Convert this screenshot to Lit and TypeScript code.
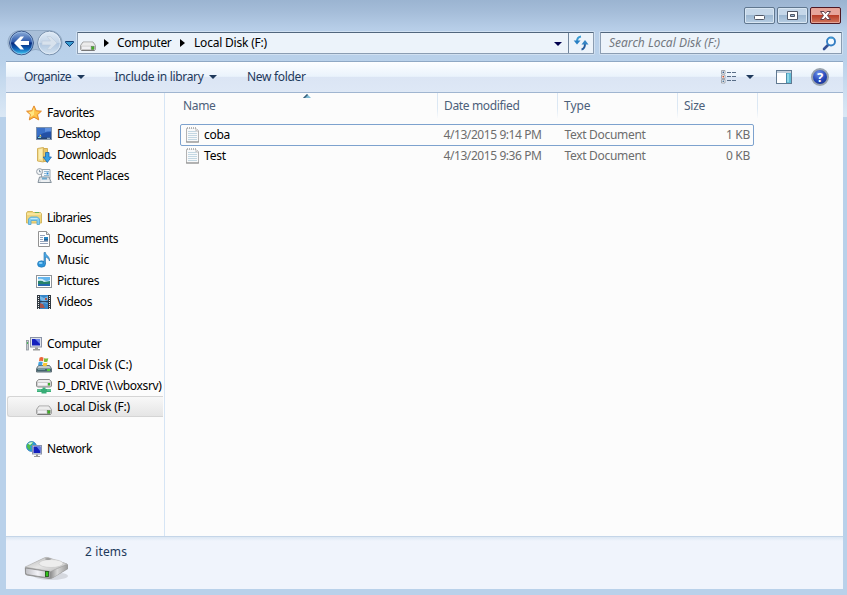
import { LitElement, html, css, svg } from "lit";
import { customElement } from "lit/decorators.js";
import { styleMap } from "lit/directives/style-map.js";

const FONT = '"Noto Sans", "Open Sans", sans-serif';
const pen = document.createElement("canvas").getContext("2d")!;

/** Real text whose tracking is computed so that it fills the given width. */
function label(text: string, width: number, italic = false) {
  pen.font = `${italic ? "italic " : ""}12px ${FONT}`;
  const gap = (width - pen.measureText(text).width) / text.length;
  return html`<span style=${styleMap({ letterSpacing: gap.toFixed(3) + "px" })}>${text}</span>`;
}

const drive = svg`<path d="M3 6h10l2.500 3.500v4l-1 1h-13l-1-1v-4z" fill="#d9d9d9" stroke="#9b9b9b" stroke-width=".9"/><path d="M3.500 6.500h9l2.200 3H1.300z" fill="#ececec"/><path d="M1 10h14v3l-1 1H2l-1-1z" fill="#c9c9c9"/><path d="M2 10.500h8.500v2.500H2z" fill="#f0f0f3"/><path d="M1.500 14.500h13" stroke="#777"/><rect x="11.500" y="10.500" width="2.500" height="3" fill="#3cb521" stroke="#567a4b" stroke-width=".5"/>`;
const screen = svg`<rect x="4.500" y="1.500" width="11" height="9.500" fill="#dfe3ec" stroke="#8b93a5"/><path d="M6 3h8v6.500H6z" fill="#1420bd"/><path d="M9 3h5v5z" fill="#6c83e8"/><path d="M9 11.500h3V13h2v1.500H7V13h2z" fill="#9c9c9c"/>`;

const art: Record<string, unknown> = {
  star: svg`<path d="M8 .9l2.200 4.800 5.200.5-3.900 3.500 1.200 5.200L8 12.200l-4.700 2.700 1.200-5.200L.6 6.200l5.200-.5z" fill="#fdb63b" stroke="#e38a2c"/><path d="M8 2.500l1.600 4 3.800.5-3 2.500.6 3L8 11z" fill="#fec64e"/><path d="M8 2.500V10l-4 2.500 1-3L2.400 7l3.800-.4z" fill="#ffe682"/>`,
  desktop: svg`<rect x=".5" y="1.500" width="15" height="12" fill="#2350a4" stroke="#7d92ad"/><path d="M1 2h14v4Q6 6 1 11z" fill="#3a70c8"/><path d="M9 2h6v3Q11 5 9 6z" fill="#5f90dd"/><path d="M1 11.500h14V13H1z" fill="#28456f"/><path d="M3 10.500l1.500-2 1 2z" fill="#f5d65b"/><path d="M2 11.500h3" stroke="#6fd0ea"/><path d="M11 12.300h3" stroke="#a6c0d9"/>`,
  downloads: svg`<path d="M7.500 1.500h4v13h-4z" fill="#e9c868" stroke="#d2ad56"/><path d="M1.500 1.500l6-1v14.500l-6-1z" fill="#f3dd90" stroke="#d4b25d"/><path d="M3 2.500l3-.8v11L3 12z" fill="#fbeeb2"/><path d="M9.500 5.500h3.500V10h2.400l-4.100 5.500L7.200 10h2.300z" fill="#35a0e5" stroke="#1d66ae" stroke-width=".8"/>`,
  recent: svg`<path d="M5.500 1.500h8.500v9H5.500z" fill="#f4f7fa" stroke="#9aa6af"/><path d="M8 3.500h5M8 5.500h2M8 7.500h5" stroke="#8fb8d3"/><rect x="10.500" y="4.500" width="2" height="2" fill="#2284d1"/><path d="M3.500 9h9.500l2.300 5.500H2z" fill="#dce2e7" stroke="#87939d"/><path d="M6 9.500h5v2H6z" fill="#6fa9ce"/><path d="M5 13h8" stroke="#fff"/><circle cx="3.600" cy="3.600" r="3" fill="#f3f6f8" stroke="#97a0a8"/><path d="M3.500 1.800v2H5.300" fill="none" stroke="#687d8f" stroke-width=".8"/>`,
  libraries: svg`<path d="M.5 3l1-1.500h5l1 1h7l1 1.500v9H.5z" fill="#f0d57c" stroke="#d3b862"/><path d="M1 4h14" stroke="#fff4bb"/><path d="M9 2.500h4" stroke="#6ab35d"/><path d="M2.500 14.500V9l2-2h7l2 2v5.500H11v-4H5v4z" fill="#84cef0" stroke="#5aa9d2" stroke-width=".9"/><path d="M4.500 8.500h7" stroke="#c4ebfc"/>`,
  documents: svg`<path d="M2.500.5h8l3 3v12h-11z" fill="#fff" stroke="#929292"/><path d="M10.500.5v3h3" fill="#e4e4e4" stroke="#929292"/><path d="M4 4.500h5M4 6.500h3M4 8.500h3M4 10.500h8M4 12.500h8" stroke="#96a4bb"/><rect x="8" y="6" width="4" height="3.500" fill="#2684c2"/><path d="M8 9h4" stroke="#173c6d"/>`,
  music: svg`<ellipse cx="5.500" cy="12" rx="4" ry="3.200" fill="#2b94da" stroke="#2270ac" stroke-width=".6"/><path d="M8 12V.5h1.500c0 3 4.500 3.500 4 8.500-.8-2.400-2-3.500-4-4V12" fill="#4baae6" stroke="#236da7" stroke-width=".6"/><ellipse cx="4.600" cy="11" rx="2" ry="1" fill="#8cd3fa"/>`,
  pictures: svg`<rect x=".5" y="2.500" width="15" height="12" fill="#fff" stroke="#8f9499"/><path d="M2 4h12v9H2z" fill="#66b6ed"/><path d="M2 6q4-1 6 1t6 0v3H2z" fill="#d0edf7"/><path d="M2 8q4-1 6 1l6-1v3H2z" fill="#26826a"/><path d="M2 11h12v2H2z" fill="#2469af"/>`,
  videos: svg`<path d="M1 1h14v14H1z" fill="#303840"/><path d="M4 1h8v14H4z" fill="#3585c8"/><path d="M4 2l4 2 4-2v4L9 7l3 3-4-1-4 2 2-4-2-2z" fill="#75b7e7"/><path d="M4 9l3 1 2 4H4zM9 4h2v2H9z" fill="#a5554c"/><path d="M4 7.700h8" stroke="#1d304a"/><path d="M2.500 2v13M13.500 2v13" stroke="#eee" stroke-dasharray="1 1"/>`,
  computer: svg`<rect x=".5" y="4.500" width="2" height="9.500" fill="#c6cbd0" stroke="#8d959c" stroke-width=".8"/><path d="M1.500 6v2" stroke="#4dba5c"/>${screen}`,
  system: svg`<path d="M2.500 8.500h11l2 3v3.500H.5v-3.500z" fill="#bfcacd" stroke="#617078"/><path d="M1 11.500h14v3H1z" fill="#43636c"/><path d="M2 12.500h7" stroke="#7599a2"/><rect x="11" y="12" width="3" height="2" fill="#53cd35"/><path d="M3.500 .7q2-1.200 4 0L7 4.300q-2-1-4 0z" fill="#eb6537"/><path d="M8.300 1q2 1 4 0l-.8 3.500q-2 1-3.700 0z" fill="#7cba38"/><path d="M2.700 5q2-1 4 0L6 8.500Q4 7.500 2 8.500z" fill="#40a1df"/><path d="M7.500 5.400q2 1 4 0L10.700 8.800q-2 1-4 0z" fill="#fac735"/>`,
  netdrive: svg`<path d="M2.500 1.500h11l2 2.500v4l-1 1h-13l-1-1V4z" fill="#cdcdcd" stroke="#8b8b8b"/><path d="M2.800 2h10.400l1.500 2H1.300z" fill="#ededed"/><path d="M2 5h9v2.500H2z" fill="#f4f4f6"/><path d="M12 5h2v2.500h-2z" fill="#39b128"/><path d="M6.500 9.500h3V11H15v3H10.500v1.500h-5V14H1v-3h5.500z" fill="#38ad77"/><path d="M1 12h4M11 12h4" stroke="#7fd6ac"/>`,
  drive,
  network: svg`<circle cx="5.500" cy="5.500" r="5" fill="#2f9ad9" stroke="#2875b1" stroke-width=".7"/><path d="M1 4q3-4 6-3L6 4 4 5l1 3-2 1-2-3z" fill="#4fbf4c"/><path d="M2 2.500q3-2 5-1L4 4z" fill="#d5f4ef"/><rect x="6.500" y="4.500" width="9" height="8.500" fill="#dfe4ec" stroke="#8994ab"/><path d="M7.500 5.500h7V12h-7z" fill="#1420bd"/><path d="M10.500 5.500h4v5z" fill="#6580e3"/><path d="M10 13.500h2V15h2v1H8v-1h2z" fill="#999"/>`,
  text: svg`<path d="M1.500 1.500h10l2 2.500v11h-12z" fill="#f8f9fa" stroke="#b3b3b3"/><path d="M2 1h11" stroke="#fff" stroke-width="1.600"/><path d="M2 1h10" stroke="#9d9d9d" stroke-width="1.400" stroke-dasharray="1 1"/><path d="M11 1.500V4h2.500" fill="#fff" stroke="#aaa" stroke-width=".8"/><path d="M3 4.500h8M3 6.500h9M3 8.500h9M3 10.500h9M3 12.500h9" stroke="#c3d7e2"/><path d="M1 15h13" stroke="#8d8d8d"/>`,
  refresh: svg`<path d="M8 1.500Q3.800 2 4 7" fill="none" stroke="#3b9bd2" stroke-width="2"/><path d="M.7 5.500h6.800L4 9.500z" fill="#287fc3"/><path d="M8.500 14.500q3.500-.5 3.500-6" fill="none" stroke="#265b9c" stroke-width="2"/><path d="M8.500 9.500h7L12 5z" fill="#3484c4"/>`,
  search: svg`<path d="M6 10l-4 4" stroke="#344f93" stroke-width="2.600" stroke-linecap="round"/><circle cx="9" cy="6.500" r="4" fill="#f3faff" stroke="#347ec3" stroke-width="1.900"/><path d="M6 4.500q2.500-3 5.500-1" fill="none" stroke="#4daddb"/>`,
  views: svg`<path d="M.5 1.500h3.500v3.500H.5zM.5 6h3.500v3.500H.5zM.5 10.500h3.500V14H.5z" fill="#fff" stroke="#a3a7af"/><path d="M1.500 2.500H3V4H1.500z" fill="#3d618f"/><path d="M1.500 7H3v1.500H1.500z" fill="#d4512f"/><path d="M1.500 11.500H3V13H1.500z" fill="#4e769a"/><path d="M6 3.500h4M11 3.500h4M6 7.500h4M11 7.500h4M6 11.500h4M11 11.500h4" stroke="#596e88"/>`,
  pane: svg`<rect x=".5" y="1.500" width="15" height="13" fill="#fff" stroke="#607991"/><path d="M1 3h14" stroke="#c4d0dd" stroke-width="2"/><path d="M10 4h5v10h-5z" fill="#61bcd6"/><path d="M10.500 4v10" stroke="#4a8eac"/><path d="M12 5v8" stroke="#a2e1ed" stroke-width="1.500"/>`,
};
const icon = (name: string, cls = "") => html`<svg class="icon ${cls}" viewBox="0 0 16 16">${art[name]}</svg>`;
const down = html`<svg class="down" viewBox="0 0 8 4"><path d="M0 0h8L4 4z" /></svg>`;
const right = html`<svg class="right" viewBox="0 0 5 8"><path d="M0 0v8l5-4z" /></svg>`;

interface Item { name: string; icon: string; width: number; selected?: boolean }
const groups: Item[][] = [
  [
    { name: "Favorites", icon: "star", width: 47 },
    { name: "Desktop", icon: "desktop", width: 43 },
    { name: "Downloads", icon: "downloads", width: 59 },
    { name: "Recent Places", icon: "recent", width: 72 },
  ],
  [
    { name: "Libraries", icon: "libraries", width: 44 },
    { name: "Documents", icon: "documents", width: 61 },
    { name: "Music", icon: "music", width: 32 },
    { name: "Pictures", icon: "pictures", width: 42 },
    { name: "Videos", icon: "videos", width: 35 },
  ],
  [
    { name: "Computer", icon: "computer", width: 54.500 },
    { name: "Local Disk (C:)", icon: "system", width: 75 },
    { name: "D_DRIVE (\\\\vboxsrv)", icon: "netdrive", width: 104.500 },
    { name: "Local Disk (F:)", icon: "drive", width: 73, selected: true },
  ],
  [{ name: "Network", icon: "network", width: 45 }],
];

const files = [
  { name: "coba", nameWidth: 26, date: "4/13/2015 9:14 PM", size: "1 KB" },
  { name: "Test", nameWidth: 22, date: "4/13/2015 9:36 PM", size: "0 KB" },
];

@customElement("app-root")
export class AppRoot extends LitElement {
  static styles = css`
    :host {
      display: flex; flex-direction: column; box-sizing: border-box;
      width: 847px; height: 595px; padding: 0 4px 6px 6px; overflow: hidden;
      font: 12px/20px "Noto Sans", "Open Sans", sans-serif; color: #000;
      background:
        linear-gradient(#b9d1ea, #b9d1ea) 0 117px / 100% 478px no-repeat,
        linear-gradient(#9bb4d1 0, #a5bdd9 12px, #b7cee8 29px, #b9d1ea 60px, #dbe8f5 117px);
      white-space: nowrap;
    }
    * { box-sizing: border-box; }
    svg { display: block; flex: none; }
    .icon { width: 16px; height: 16px; }
    .down { width: 8px; height: 4px; fill: #1e395b; }
    .right { width: 5px; height: 8px; fill: #000; }

    .caption { height: 31px; flex: none; display: flex; justify-content: flex-end; gap: 2px; padding: 7px 2px 0 0; }
    .cap {
      width: 31px; height: 17px; border: 1px solid #60778f; border-radius: 2px; display: grid; place-items: center;
      background: linear-gradient(#c5d7e9 0 47%, #9cb7d1 48%, #b7cee4); box-shadow: inset 0 0 0 1px #d8e6f3;
    }
    .cap.close { border-color: #4f1823; background: linear-gradient(#e7a59b 0 44%, #b83c26 48%, #cf765d); box-shadow: inset 0 0 0 1px #e5a496; }
    .cap svg { width: 13px; height: 11px; }

    .navbar { height: 30px; flex: none; display: flex; align-items: flex-start; }
    .travel { width: 59px; height: 27px; margin-left: 1px; margin-top: -2px; }
    .history { margin: 10px 4px 0 -1px; width: 9px; height: 6px; }
    .address, .search { height: 22px; margin-top: 1px; display: flex; align-items: center; border: 1px solid #8b9db2; border-top-color: #51667d; background: #ecf3fa; box-shadow: 0 0 0 1px #d0e0f1; border-radius: 1px; }
    .address { width: 517px; margin-left: -1px; padding-left: 2px; }
    .address .icon { margin-top: 1px; }
    .crumb1 { margin-left: 8px; }
    .text1 { margin-left: 8px; width: 55px; }
    .crumb2 { margin-left: 8px; }
    .text2 { margin-left: 9px; flex: 1; }
    .address .down { fill: #00004d; margin-right: 6px; margin-top: 2px; }
    .refresh { width: 25px; height: 20px; border-left: 1px solid #71859c; display: grid; place-items: center; }
    .refresh .icon { margin-top: 0; }
    .search { width: 242px; margin-left: 6px; padding: 0 3px 0 8px; justify-content: space-between; color: #737880; font-style: italic; }

    .toolbar {
      height: 32px; flex: none; display: flex; align-items: center; padding: 0 14px 0 18px; color: #1e395b;
      border-top: 1px solid #8fa8c4; border-bottom: 1px solid #a0b5d0; box-shadow: inset 0 -1px #dfe9f6;
      background: linear-gradient(#fdfeff, #eaf3fc 48%, #dbe5f4 50%, #dee8f6);
    }
    .cmd { display: flex; align-items: center; gap: 5.500px; margin-right: 30px; }
    .tools { margin-left: auto; display: flex; align-items: center; }
    .tools .down { margin: 0 22px 0 9px; }
    .help { width: 18px; height: 18px; border-radius: 50%; margin-left: 19px; background: radial-gradient(circle at 40% 25%, #6e91eb, #2546b7 55%, #152c82); border: 2px solid #99a3ae; color: #fff; font-weight: 700; font-size: 13px; line-height: 14px; text-align: center; }

    .body { flex: 1; min-height: 0; display: flex; background: #fcfcfc; }
    .tree { width: 159px; padding-top: 9px; border-right: 1px solid #d6e5f5; flex: none; }
    .group { margin-bottom: 21px; }
    .node { height: 21px; display: flex; align-items: center; gap: 5px; padding-left: 29px; margin: 0 1px; border: 1px solid transparent; border-right: 0; }
    .node.head { padding-left: 18px; }
    .node .icon { margin-left: -1px; }
    .node.head .icon { margin-left: 0; }
    .node.selected { border-color: #d5d5d5; border-radius: 3px 0 0 3px; background: linear-gradient(#f8f8f8, #e5e5e5); }
    .node.selected .icon { margin-top: 3px; }

    .files { flex: 1; }
    .head-row { display: grid; grid-template-columns: 273px 120px 120px 80px; height: 25px; color: #4c607a; }
    .col { display: flex; align-items: flex-start; padding: 3px 0 0 6px; border-right: 1px solid; border-image: linear-gradient(#d9e6f4, #dce8f4 60%, #fcfcfc) 1; }
    .col.first { padding-left: 18px; position: relative; }
    .sort { position: absolute; left: 138px; top: 1px; width: 8px; height: 4px; }
    .rows { padding: 6px 0 0 15px; }
    .file { width: 574px; height: 21px; display: grid; grid-template-columns: 258px 120px 120px 71px; align-items: center; border: 1px solid transparent; border-radius: 2px; color: #6d6d6d; }
    .file.focus { border-color: #7da2ce; height: 22px; margin-bottom: -1px; }
    .name { display: flex; align-items: center; gap: 4px; padding-left: 3px; color: #000; }
    .name .icon { margin: -1px 0 0 1px; }
    .name .icon + span { margin-left: -1px; }
    .date { padding-left: 4.500px; }
    .type { padding-left: 5.500px; }
    .size { text-align: right; }

    .details { height: 53px; flex: none; display: flex; background: linear-gradient(#dce7f3, #f0f4fc 4px); border-top: 1px solid #c4d5e8; color: #1e395b; }
    .disk { width: 46px; height: 25px; margin: 19px 15px 0 18px; }
    .count { padding-top: 5px; }
  `;

  render() {
    return html`
      <div class="caption">
        <div class="cap"><svg viewBox="0 0 13 11"><rect x="1.500" y="5.500" width="10" height="4" rx="1" fill="#fff" stroke="#515766" /></svg></div>
        <div class="cap"><svg viewBox="0 0 13 11"><path fill-rule="evenodd" d="M1.500 1.500h10v8h-10zM4.500 4.500v2h4v-2z" fill="#fff" stroke="#515766" /></svg></div>
        <div class="cap close"><svg viewBox="0 0 13 11"><path d="M1.500 1.500h3.500l1.500 2L8 1.500h3.500L8.500 5.500l3 4H8l-1.500-2-1.500 2H1.500l3-4z" fill="#fff" stroke="#62404a" /></svg></div>
      </div>
      <div class="navbar">
        <svg class="travel" viewBox="0 0 59 27">
          <defs>
            <linearGradient id="blue" x2="0" y2="1"><stop stop-color="#8eaed9" /><stop offset=".45" stop-color="#2e5aac" /><stop offset=".5" stop-color="#07297c" /><stop offset=".75" stop-color="#1164b9" /><stop offset="1" stop-color="#45d2f6" /></linearGradient>
            <linearGradient id="pale" x2="0" y2="1"><stop stop-color="#e0ebf6" /><stop offset=".48" stop-color="#c4d5e8" /><stop offset=".5" stop-color="#aec5df" /><stop offset="1" stop-color="#d4e3f1" /></linearGradient>
          </defs>
          <path d="M14 1.500h27c8 0 14 5 14 12s-6 12-12 12-8-5-14-5-8 5-15 5S1 20 1 13.500 6 1.500 14 1.500z" fill="#a9bfd8" stroke="#93abc6" />
          <circle cx="14.500" cy="14" r="11.800" fill="url(#blue)" stroke="#304e83" />
          <circle cx="14.500" cy="14" r="11" fill="none" stroke="#a8c8ec" stroke-width=".7" />
          <path d="M7 14l6.500-6.500h3.500L13.500 12H22v4h-8.500l3.500 4.500h-3.500z" fill="#fff" />
          <circle cx="42.500" cy="14" r="11.800" fill="url(#pale)" stroke="#7890ac" />
          <circle cx="42.500" cy="14" r="10.800" fill="none" stroke="#e4edf7" stroke-width=".8" />
          <path d="M50 14l-6.500-6.500H40l3.500 4.500H35v4h8.500L40 20.500h3.500z" fill="#d8e2ed" stroke="#bccbdc" stroke-width=".6" />
        </svg>
        <svg class="history" viewBox="0 0 9 6"><path d="M.5.5h8v1l-4 4-4-4z" fill="#379bd0" stroke="#123f75" /></svg>
        <div class="address">
          ${icon("drive")}<span class="crumb1">${right}</span><span class="text1">${label("Computer", 54.500)}</span>
          <span class="crumb2">${right}</span><span class="text2">${label("Local Disk (F:)", 73)}</span>
          ${down}<span class="refresh">${icon("refresh")}</span>
        </div>
        <div class="search">${label("Search Local Disk (F:)", 111, true)}${icon("search")}</div>
      </div>
      <div class="toolbar">
        <div class="cmd">${label("Organize", 47)}${down}</div>
        <div class="cmd">${label("Include in library", 89)}${down}</div>
        <div class="cmd">${label("New folder", 58.500)}</div>
        <div class="tools">${icon("views")}${down}${icon("pane")}<span class="help">?</span></div>
      </div>
      <div class="body">
        <div class="tree">
          ${groups.map((g) => html`<div class="group">
            ${g.map((n, i) => html`<div class="node ${i ? "" : "head"} ${n.selected ? "selected" : ""}">${icon(n.icon)}${label(n.name, n.width)}</div>`)}
          </div>`)}
        </div>
        <div class="files">
          <div class="head-row">
            <div class="col first">${label("Name", 32.500)}<svg class="sort" viewBox="0 0 8 4"><path d="M0 4l4-4 4 4z" fill="#7fbcd6" /><path d="M0 4l4-4 1 1-3 3z" fill="#3c5e78" /></svg></div>
            <div class="col">${label("Date modified", 75.500)}</div>
            <div class="col">${label("Type", 26.500)}</div>
            <div class="col">${label("Size", 21)}</div>
          </div>
          <div class="rows">
            ${files.map((f, i) => html`<div class="file ${i ? "" : "focus"}">
              <span class="name">${icon("text")}${label(f.name, f.nameWidth)}</span>
              <span class="date">${label(f.date, 98)}</span>
              <span class="type">${label("Text Document", 81)}</span>
              <span class="size">${label(f.size, 24)}</span>
            </div>`)}
          </div>
        </div>
      </div>
      <div class="details">
        <svg class="disk" viewBox="0 0 46 25">
          <defs>
            <linearGradient id="metal" x2="1" y2="1"><stop stop-color="#b5b5b5" /><stop offset=".5" stop-color="#e6e6e6" /><stop offset="1" stop-color="#b8b8b8" /></linearGradient>
            <linearGradient id="face" x2="1"><stop stop-color="#bdbdc2" /><stop offset=".5" stop-color="#f3f3f8" /><stop offset="1" stop-color="#b4b4b6" /></linearGradient>
            <linearGradient id="side" x2="1"><stop stop-color="#8e8e8e" /><stop offset=".4" stop-color="#d9d9d9" /><stop offset="1" stop-color="#9a9a9a" /></linearGradient>
          </defs>
          <ellipse cx="27" cy="20" rx="17" ry="4" fill="#d5d8df" />
          <path d="M.8 11.500L20 2q2-1 4-.6l18.500 6.100q1.500.5 1.500 2v3.500L29 22q-2 1.200-4 1L3 19.500q-2-.3-2-2z" fill="#9a9a9a" />
          <path d="M1 11L20 2q2-1 4-.5L43 8 26.500 15.500z" fill="url(#metal)" stroke="#b4b4b4" stroke-width=".6" />
          <ellipse cx="27" cy="7.500" rx="12" ry="4" fill="#ededed" stroke="#c4c4c4" stroke-width=".6" />
          <path d="M1.500 12l24.500 3.800v6.400L3.500 18.700q-2-.4-2-2z" fill="url(#face)" stroke="#8a8a8a" stroke-width=".8" />
          <path d="M26.500 15.800L43.500 8.500v4L28.500 22l-2 .6z" fill="url(#side)" />
          <ellipse cx="24" cy="3" rx="3" ry="1" fill="#9d9d9d" />
          <rect x="21.500" y="15.500" width="3" height="5" fill="#31c51a" stroke="#245b1d" stroke-width=".9" />
        </svg>
        <span class="count">${label("2 items", 42)}</span>
      </div>
    `;
  }
}
